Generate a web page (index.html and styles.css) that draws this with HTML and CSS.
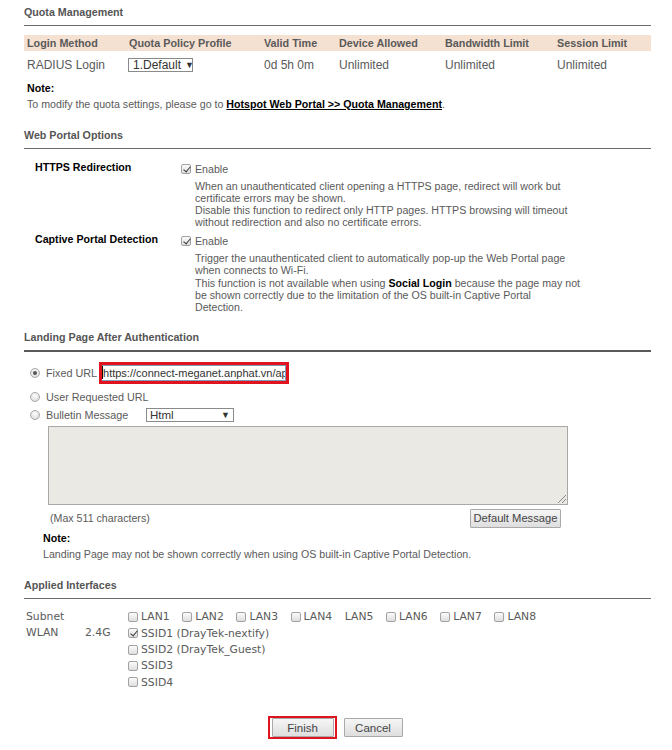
FILE: index.html
```html
<!DOCTYPE html>
<html>
<head>
<meta charset="utf-8">
<title>Hotspot Web Portal</title>
<link rel="stylesheet" href="styles.css">
</head>
<body>
<div class="page">
  <section class="sec sec-quota">
    <div class="sec-title">Quota Management</div>
    <div class="qtable">
      <div class="qrow qhead">
        <span>Login Method</span><span>Quota Policy Profile</span><span>Valid Time</span><span>Device Allowed</span><span>Bandwidth Limit</span><span>Session Limit</span>
      </div>
      <div class="qrow qbody">
        <span>RADIUS Login</span>
        <span><span class="select sel-profile">1.Default <span class="arrow">&#9660;</span></span></span>
        <span>0d 5h 0m</span><span>Unlimited</span><span>Unlimited</span><span>Unlimited</span>
      </div>
    </div>
    <div class="note-title">Note:</div>
    <div class="note-text">To modify the quota settings, please go to <a class="link">Hotspot Web Portal &gt;&gt; Quota Management</a>.</div>
  </section>

  <section class="sec sec-web">
    <div class="sec-title">Web Portal Options</div>
    <div class="opt opt-first">
      <div class="opt-label">HTTPS Redirection</div>
      <div class="opt-body">
        <label class="chk-line"><span class="cb checked"></span>Enable</label>
        <div class="desc">When an unauthenticated client opening a HTTPS page, redirect will work but<br>certificate errors may be shown.<br>Disable this function to redirect only HTTP pages. HTTPS browsing will timeout<br>without redirection and also no certificate errors.</div>
      </div>
    </div>
    <div class="opt">
      <div class="opt-label">Captive Portal Detection</div>
      <div class="opt-body">
        <label class="chk-line"><span class="cb checked"></span>Enable</label>
        <div class="desc">Trigger the unauthenticated client to automatically pop-up the Web Portal page<br>when connects to Wi-Fi.<br>This function is not available when using <b class="strong">Social Login</b> because the page may not<br>be shown correctly due to the limitation of the OS built-in Captive Portal<br>Detection.</div>
      </div>
    </div>
  </section>

  <section class="sec sec-landing">
    <div class="sec-title thick">Landing Page After Authentication</div>
    <div class="radio-row row-fixed">
      <span class="rb checked"></span><span class="rlabel">Fixed URL</span>
      <span class="hl-box"><span class="url-input"><span class="caret"></span>https://connect-meganet.anphat.vn/api/</span></span>
    </div>
    <div class="radio-row">
      <span class="rb"></span><span class="rlabel">User Requested URL</span>
    </div>
    <div class="radio-row">
      <span class="rb"></span><span class="rlabel rlabel-wide">Bulletin Message</span>
      <span class="select sel-html">Html<span class="arrow">&#9660;</span></span>
    </div>
    <div class="textarea"><span class="grip"></span></div>
    <div class="ta-foot">
      <span class="max">(Max 511 characters)</span>
      <span class="btn btn-default">Default Message</span>
    </div>
    <div class="note2">
      <div class="note-title">Note:</div>
      <div>Landing Page may not be shown correctly when using OS built-in Captive Portal Detection.</div>
    </div>
  </section>

  <section class="sec sec-iface">
    <div class="sec-title">Applied Interfaces</div>
    <div class="iface">
      <div class="if-row">
        <span class="if-name">Subnet</span><span class="if-band"></span>
        <div class="if-items">
          <span class="if-item"><span class="cb"></span>LAN1</span>
          <span class="if-item"><span class="cb"></span>LAN2</span>
          <span class="if-item"><span class="cb"></span>LAN3</span>
          <span class="if-item"><span class="cb"></span>LAN4</span>
          <span class="if-item">LAN5</span>
          <span class="if-item"><span class="cb"></span>LAN6</span>
          <span class="if-item"><span class="cb"></span>LAN7</span>
          <span class="if-item"><span class="cb"></span>LAN8</span>
        </div>
      </div>
      <div class="if-row">
        <span class="if-name">WLAN</span><span class="if-band">2.4G</span>
        <div class="if-col">
          <span class="if-item"><span class="cb checked"></span>SSID1 (DrayTek-nextify)</span>
          <span class="if-item"><span class="cb"></span>SSID2 (DrayTek_Guest)</span>
          <span class="if-item"><span class="cb"></span>SSID3</span>
          <span class="if-item"><span class="cb"></span>SSID4</span>
        </div>
      </div>
    </div>
  </section>
</div>
<div class="actions">
  <span class="hl-btn"><span class="btn btn-main">Finish</span></span>
  <span class="btn btn-main btn-cancel">Cancel</span>
</div>
</body>
</html>
```

FILE: styles.css
```css
* { box-sizing: border-box; }
body {
  margin: 0;
  font-family: "Liberation Sans", Arial, sans-serif;
  font-size: 10.65px;
  color: #5a5a5a;
  background: #fff;
}
.page {
  width: 651px;
  padding-left: 24px;
}
.sec-title {
  font-weight: bold;
  font-size: 10.7px;
  color: #555;
  line-height: 16px;
  padding: 4px 0 5px 0;
  border-bottom: 1px solid #6a6a6a;
}
.sec-title.thick { border-bottom: 2px solid #5a5a5a; }

/* Quota */
.qtable { margin-top: 9px; }
.qrow {
  display: grid;
  grid-template-columns: 102px 135px 75px 106px 112px 1fr;
  padding-left: 3px;
  align-items: center;
}
.qhead {
  height: 16px;
  background: #f5e1d1;
  font-weight: bold;
  font-size: 10.8px;
  color: #5a5a5a;
}
.qbody {
  height: 28px;
  font-size: 12px;
  color: #5a5a5a;
}
.select {
  display: inline-flex;
  align-items: center;
  height: 14px;
  border: 1px solid #8a8a8a;
  background: #fff;
  color: #333;
  font-size: 12px;
  line-height: 12px;
  padding: 0 3px 0 4px;
}
.select .arrow { font-size: 9px; margin-left: 4px; color: #333; }
.sel-profile { width: 65px; margin-left: -1px; }
.note-title {
  font-weight: bold;
  color: #000;
  line-height: 16px;
}
.sec-quota .note-title { margin-top: 1px; padding-left: 3px; }
.note-text { line-height: 16px; padding-left: 3px; }
.link { color: #000; font-weight: bold; text-decoration: underline; }

/* Web portal options */
.sec-web { margin-top: 11px; }
.opt {
  display: grid;
  grid-template-columns: 146px 1fr;
  padding-left: 11px;
  margin-top: 3px;
}
.opt-first { margin-top: 10px; }
.opt-label {
  font-weight: bold;
  color: #000;
  line-height: 16px;
}
.chk-line {
  display: flex;
  align-items: center;
  margin-top: 2px;
  height: 16px;
  color: #5a5a5a;
}
.cb {
  display: inline-block;
  position: relative;
  width: 10px;
  height: 10px;
  border: 1px solid #a2a2a2;
  border-radius: 2px;
  background: linear-gradient(#fbfbfb, #dedede);
  margin-right: 4px;
  flex: none;
}
.cb.checked::after {
  content: "";
  position: absolute;
  left: 3px;
  top: 0px;
  width: 3px;
  height: 6px;
  border: solid #3a3a3a;
  border-width: 0 1.5px 1.5px 0;
  transform: rotate(40deg);
}
.desc {
  margin-top: 3px;
  padding-left: 14px;
  line-height: 12.1px;
}
.strong { color: #000; }

/* Landing */
.sec-landing { margin-top: 12px; }
.radio-row {
  display: flex;
  align-items: center;
  height: 16px;
  padding-left: 6px;
  margin-top: 2px;
}
.row-fixed { height: 22px; margin-top: 10px; margin-bottom: 5px; }
.rb {
  width: 10px;
  height: 10px;
  border-radius: 50%;
  border: 1px solid #a8a8a8;
  background: radial-gradient(circle at 50% 35%, #fdfdfd, #d6d6d6);
  margin-right: 6px;
  position: relative;
  flex: none;
}
.rb.checked::after {
  content: "";
  position: absolute;
  left: 2px;
  top: 2px;
  width: 4px;
  height: 4px;
  border-radius: 50%;
  background: #555;
}
.rlabel { font-size: 10.8px; color: #5a5a5a; }
.rlabel-wide { width: 100px; }
.hl-box {
  margin-left: 2px;
  border: 3px solid #e0141e;
  height: 22px;
  width: 190px;
  display: flex;
}
.url-input {
  flex: 1;
  overflow: hidden;
  white-space: nowrap;
  font-size: 11px;
  color: #333;
  line-height: 16px;
  border: 1px solid #7f9db9;
  border-left: 0;
  display: flex;
  align-items: center;
}
.caret {
  width: 1px;
  height: 13px;
  background: #111;
  margin-right: 0;
  flex: none;
}
.sel-html { width: 88px; justify-content: space-between; padding-left: 3px; font-size: 11.5px; }
.textarea {
  margin-top: 3px;
  margin-left: 24px;
  width: 520px;
  height: 79px;
  border: 1px solid #a8a8a8;
  background: #eae9e3;
  position: relative;
}
.grip {
  position: absolute;
  right: 1px;
  bottom: 1px;
  width: 8px;
  height: 8px;
  background: linear-gradient(135deg, transparent 45%, #888 45%, #888 52%, transparent 52%, transparent 70%, #888 70%, #888 77%, transparent 77%);
}
.ta-foot {
  display: flex;
  justify-content: space-between;
  align-items: center;
  width: 537px;
  padding-left: 26px;
  margin-top: 4px;
  height: 19px;
}
.max { color: #5a5a5a; }
.btn {
  display: inline-flex;
  align-items: center;
  justify-content: center;
  height: 19px;
  border: 1px solid #a9a9a9;
  border-radius: 1px;
  background: linear-gradient(#f6f6f6, #dedede);
  color: #444;
  font-size: 11.5px;
  white-space: nowrap;
}
.btn-default { width: 91px; font-size: 11.2px; }
.note2 { padding-left: 19px; margin-top: 2px; line-height: 17px; }

/* Interfaces */
.sec-iface { margin-top: 10px; }
.iface {
  margin-top: 10px;
  font-family: "DejaVu Sans", Verdana, sans-serif;
  font-size: 10.8px;
  color: #5a5a5a;
  padding-left: 2px;
}
.if-row { display: flex; }
.if-name { width: 59px; line-height: 16px; }
.if-band { width: 43px; line-height: 16px; }
.if-items { display: flex; gap: 12.6px; }
.if-col { display: flex; flex-direction: column; }
.if-item {
  display: flex;
  align-items: center;
  height: 16.3px;
  white-space: nowrap;
}
.if-item .cb { margin-right: 3px; }

/* Actions */
.actions {
  width: 672px;
  display: flex;
  justify-content: center;
  align-items: center;
  gap: 7px;
  margin-top: 26px;
  padding-right: 2px;
}
.hl-btn {
  display: inline-flex;
  border: 2px solid #e0141e;
  padding: 0 1px 0 2px;
  height: 23px;
  align-items: center;
}
.btn-main { width: 62px; }
.btn-cancel { width: 59px; }
```
